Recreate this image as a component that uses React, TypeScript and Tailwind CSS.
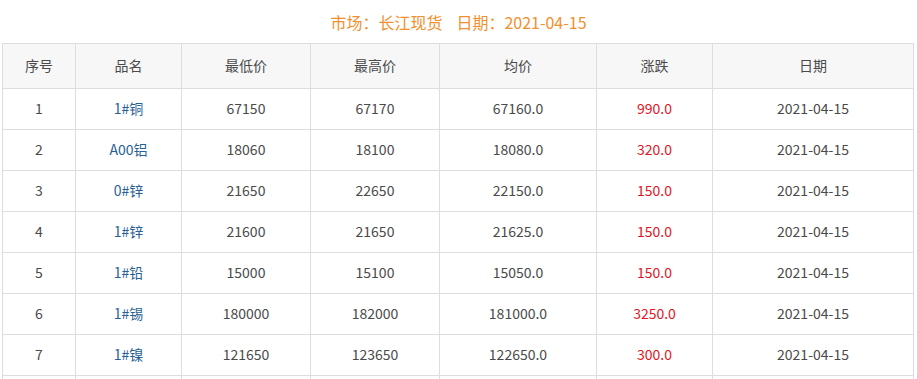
const rows = [
  ["1", "1#铜", "67150", "67170", "67160.0", "990.0"],
  ["2", "A00铝", "18060", "18100", "18080.0", "320.0"],
  ["3", "0#锌", "21650", "22650", "22150.0", "150.0"],
  ["4", "1#锌", "21600", "21650", "21625.0", "150.0"],
  ["5", "1#铅", "15000", "15100", "15050.0", "150.0"],
  ["6", "1#锡", "180000", "182000", "181000.0", "3250.0"],
  ["7", "1#镍", "121650", "123650", "122650.0", "300.0"],
];

const headers = ["序号", "品名", "最低价", "最高价", "均价", "涨跌", "日期"];

const cols = "grid grid-cols-[73px_106px_129px_129px_157px_116px_201px]";
const cell = "flex items-center justify-center border-r border-b border-[#dddddd] pb-[2px]";

export default function App() {
  return (
    <div
      className="w-[917px] h-[379px] overflow-hidden bg-white text-[14px] text-[#4a4a4a]"
      style={{ fontFamily: '"Noto Sans CJK SC", "Noto Sans", sans-serif' }}
    >
      <div className="h-[43px] flex items-center justify-center text-[16px] text-[#f2902f] pt-[1px]">
        <span>市场：长江现货</span>
        <span className="ml-[14px]">日期：2021-04-15</span>
      </div>
      <div className="ml-[2px] w-[912px] border-l border-t border-[#dddddd]">
        <div className={`${cols} h-[45px] bg-[#f7f7f7]`}>
          {headers.map((h) => (
            <div key={h} className={cell}>
              {h}
            </div>
          ))}
        </div>
        {rows.map((r) => (
          <div key={r[0]} className={`${cols} h-[41px]`}>
            <div className={cell}>{r[0]}</div>
            <div className={`${cell} text-[#2a5f93]`}>{r[1]}</div>
            <div className={cell}>{r[2]}</div>
            <div className={cell}>{r[3]}</div>
            <div className={cell}>{r[4]}</div>
            <div className={`${cell} text-[#e3141f]`}>{r[5]}</div>
            <div className={cell}>2021-04-15</div>
          </div>
        ))}
        <div className={`${cols} h-[41px]`}>
          {headers.map((h) => (
            <div key={h} className={cell}></div>
          ))}
        </div>
      </div>
    </div>
  );
}
